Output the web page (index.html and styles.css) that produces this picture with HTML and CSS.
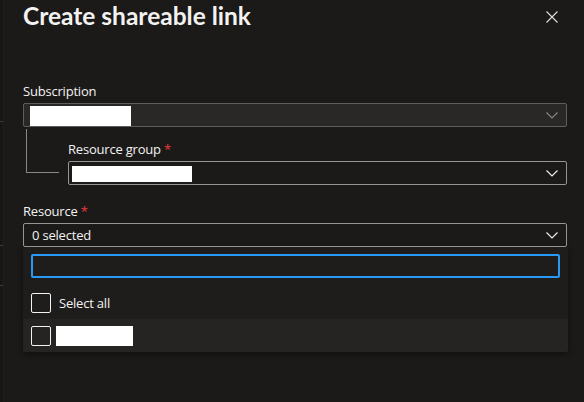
FILE: index.html
```html
<!DOCTYPE html>
<html>
<head>
<meta charset="utf-8">
<link rel="stylesheet" href="styles.css">
</head>
<body>
<div class="page">
  <div class="edge">
    <span class="tick t1"></span>
    <span class="tick t2"></span>
    <span class="tick t3"></span>
  </div>
  <div class="panel">
    <div class="header">
      <h1 class="title">Create shareable link</h1>
      <svg class="close" width="12" height="12" viewBox="0 0 12 12"><path d="M0.5 0.5L11.5 11.5M11.5 0.5L0.5 11.5" stroke="#e1dfdd" stroke-width="1.1" fill="none"/></svg>
    </div>

    <div class="field sub">
      <label class="label">Subscription</label>
      <div class="select disabled">
        <span class="redact r1"></span>
        <svg class="chev" width="12" height="7" viewBox="0 0 12 7"><path d="M0.5 0.5L6 6L11.5 0.5" stroke="#8a8886" stroke-width="1.1" fill="none"/></svg>
      </div>
    </div>

    <div class="nested">
      <div class="tree"></div>
      <div class="field rg">
        <label class="label">Resource group <span class="req">*</span></label>
        <div class="select">
          <span class="redact r2"></span>
          <svg class="chev" width="12" height="7" viewBox="0 0 12 7"><path d="M0.5 0.5L6 6L11.5 0.5" stroke="#f3f2f1" stroke-width="1.1" fill="none"/></svg>
        </div>
      </div>
    </div>

    <div class="field res">
      <label class="label">Resource <span class="req">*</span></label>
      <div class="select">
        <span class="value">0 selected</span>
        <svg class="chev" width="12" height="7" viewBox="0 0 12 7"><path d="M0.5 0.5L6 6L11.5 0.5" stroke="#f3f2f1" stroke-width="1.1" fill="none"/></svg>
      </div>
      <div class="dropdown">
        <div class="search"></div>
        <div class="option">
          <span class="box"></span>
          <span class="opt-text">Select all</span>
        </div>
        <div class="option hover">
          <span class="box"></span>
          <span class="redact r3"></span>
        </div>
      </div>
    </div>
  </div>
</div>
</body>
</html>
```

FILE: styles.css
```css
* { box-sizing: border-box; }
html, body {
  margin: 0;
  height: 100%;
  background: #1b1a19;
  font-family: "Open Sans", "Noto Sans", sans-serif;
  color: #f3f2f1;
}
.page {
  display: flex;
  height: 402px;
  overflow: hidden;
}
.edge {
  position: relative;
  width: 4px;
  flex: none;
  background: #181716;
  border-right: 1px solid #201f1e;
}
.tick {
  position: absolute;
  left: 0;
  width: 3px;
  height: 1px;
  background: #3b3a39;
}
.t1 { top: 121px; }
.t2 { top: 245px; }
.t3 { top: 285px; }
.panel {
  flex: 1;
  padding: 0 17px 0 19px;
}
.header {
  display: flex;
  justify-content: space-between;
  align-items: flex-start;
  height: 84px;
}
.title {
  margin: 1px 0 0 0;
  font-family: "Lato", "Open Sans", sans-serif;
  font-size: 24.5px;
  font-weight: 700;
  letter-spacing: 0;
  line-height: 30px;
  color: #f3f2f1;
}
.close {
  margin: 11px 9px 0 0;
}
.label {
  display: block;
  font-size: 13px;
  line-height: 15px;
  height: 19px;
  color: #f3f2f1;
  letter-spacing: -0.2px;
}
.req { color: #d13438; font-weight: 600; }
.select {
  position: relative;
  height: 24px;
  border: 1px solid #979593;
  border-radius: 2px;
  display: flex;
  align-items: center;
  padding: 0 8px;
}
.select.disabled {
  background: #292827;
  border-color: #605e5c;
}
.chev {
  margin-left: auto;
  margin-right: 0;
}
.redact { display: block; background: #ffffff; }
.r1 { width: 101px; height: 20px; margin-left: -2px; margin-top: 1px; }
.r2 { width: 120px; height: 16px; margin-left: -5px; margin-top: 1px; }
.r3 { width: 77px; height: 20px; margin-left: 5px; margin-top: 1px; }
.value { font-size: 13px; letter-spacing: -0.2px; color: #f3f2f1; }
.nested {
  display: flex;
  height: 76px;
  padding-top: 2px;
}
.tree {
  height: 44px;
  flex: none;
  margin-left: 3px;
  border-left: 1px solid #8a8886;
  border-bottom: 1px solid #8a8886;
  width: 33px;
}
.rg {
  flex: 1;
  margin-left: 9px;
  padding-top: 13px;
}
.res { padding-top: 1px; }
.dropdown {
  background: #1e1d1c;
  box-shadow: 0 2px 6px rgba(0,0,0,0.45);
  border-radius: 0 0 2px 2px;
  padding-top: 7px;
  margin-right: -1px;
}
.search {
  margin: 0 8px;
  height: 24px;
  border: 2px solid #2899f5;
  border-radius: 2px;
}
.option {
  display: flex;
  align-items: center;
  height: 33px;
  padding-left: 8px;
}
.search + .option { margin-top: 9px; height: 32px; }
.option.hover { background: #252423; border-radius: 0 0 2px 2px; }
.box {
  width: 20px;
  height: 20px;
  border: 1px solid #f3f2f1;
  border-radius: 2px;
}
.opt-text {
  margin-left: 8px;
  font-size: 13px;
  letter-spacing: -0.2px;
}
```
